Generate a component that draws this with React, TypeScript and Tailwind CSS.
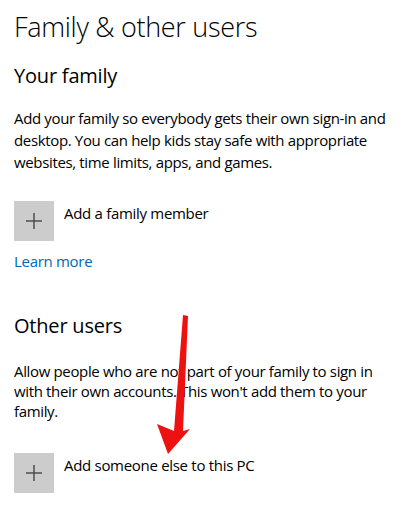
import React from "react";

const FONT = { fontFamily: '"Open Sans", "Noto Sans", sans-serif' };

function AddRow({ label }: { label: string }) {
  return (
    <div className="flex items-start gap-[10px]">
      <div className="flex h-[40px] w-[40px] items-center justify-center bg-[#cccccc]">
        <svg width="16" height="16" viewBox="0 0 16 16">
          <path d="M8 0v16M0 8h16" stroke="#4d4d4d" strokeWidth="1.5" />
        </svg>
      </div>
      <span className="mt-[2px] text-[15px] leading-[20px] tracking-[-0.3px] text-black">{label}</span>
    </div>
  );
}

export default function App() {
  return (
    <div className="relative h-[505px] w-[406px] overflow-hidden bg-white pl-[14px] pt-[8px]" style={FONT}>
      <h1 className="text-[27px] font-light leading-[38px] tracking-[-0.3px] text-black">Family &amp; other users</h1>

      <h2 className="mt-[17px] text-[20px] leading-[26px] tracking-[-0.2px] text-black">Your family</h2>
      <p className="mt-[18px] pr-[8px] text-[15px] leading-[22px] tracking-[-0.35px] text-black">
        Add your family so everybody gets their own sign-in and desktop. You can help kids stay safe with appropriate
        websites, time limits, apps, and games.
      </p>
      <div className="mt-[28px]">
        <AddRow label="Add a family member" />
      </div>
      <a className="mt-[10px] block text-[15px] leading-[20px] tracking-[-0.3px] text-[#0067b8]">Learn more</a>

      <h2 className="mt-[42px] text-[20px] leading-[26px] tracking-[-0.2px] text-black">Other users</h2>
      <p className="mt-[22px] pr-[8px] text-[15px] leading-[20px] tracking-[-0.35px] text-black">
        Allow people who are not part of your family to sign in with their own accounts. This won't add them to your
        family.
      </p>
      <div className="mt-[32px]">
        <AddRow label="Add someone else to this PC" />
      </div>

      <svg className="absolute left-0 top-0" width="406" height="505" viewBox="0 0 406 505">
        <path d="M183 315 L188 316 L183 431 L190 429 L168 454 L157 424 L174 431 Z" fill="#ee1111" />
      </svg>
    </div>
  );
}
